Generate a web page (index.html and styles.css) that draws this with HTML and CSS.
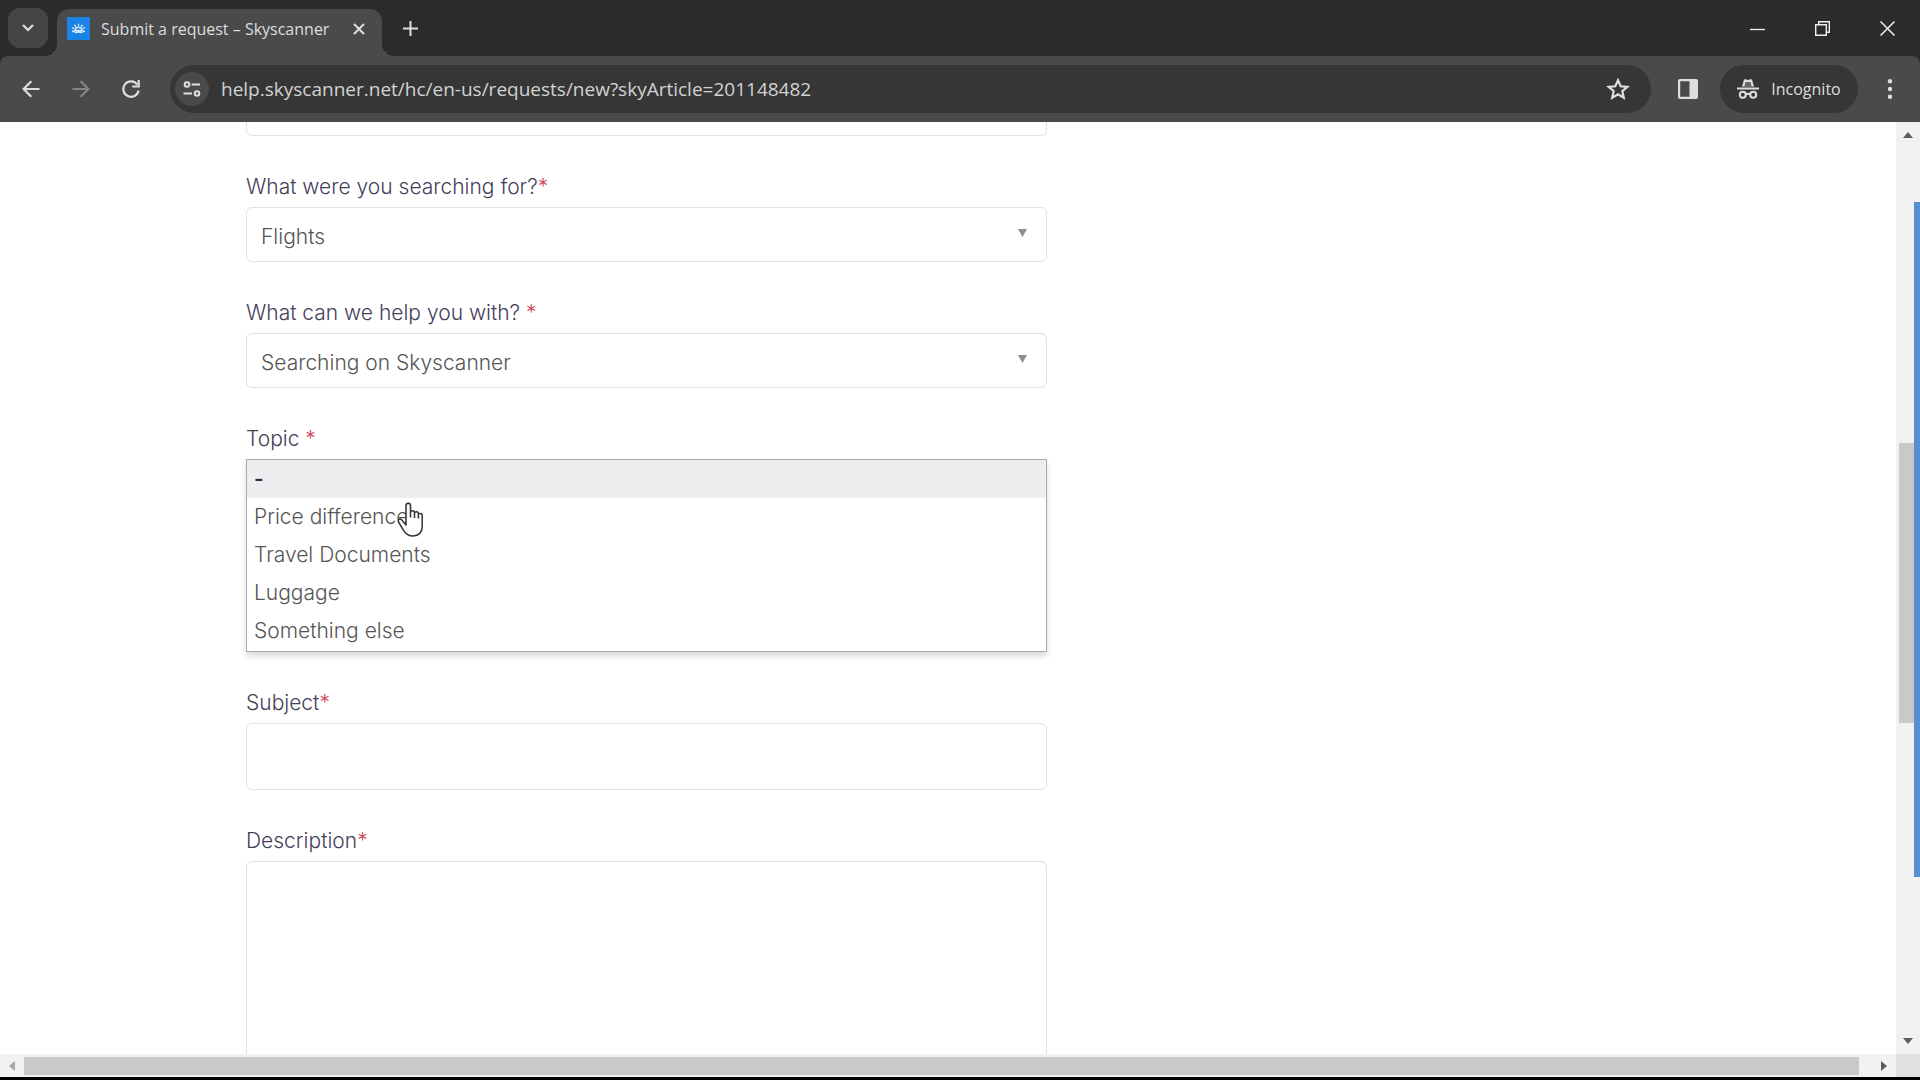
FILE: index.html
```html
<!DOCTYPE html>
<html lang="en">
<head>
<meta charset="utf-8">
<title>Submit a request – Skyscanner</title>
<link rel="stylesheet" href="styles.css">
</head>
<body>
<header class="browser">
  <div class="tabstrip">
    <button class="tab-search" aria-label="Search tabs"><svg width="12" height="8" viewBox="0 0 12 8"><path d="M1 1l5 5 5-5" fill="none" stroke="currentColor" stroke-width="2.2"/></svg></button>
    <div class="tab">
      <svg class="favicon" width="23" height="23" viewBox="0 0 23 23"><rect width="23" height="23" fill="#1b82e6"/><g fill="none" stroke="#d8ecff" stroke-width="1.4" stroke-linecap="round"><path d="M8 13a3.6 3.6 0 0 1 7 0M11.500 7.200v1M7.800 8.300l.8.9M15.200 8.300l-.8.9M5.400 10.800l1.300.4M17.600 10.800l-1.300.4"/><path d="M5.500 14.500c3-1.400 9-1.400 12 0M8 15.600c2-.7 5-.7 7 0"/></g></svg>
      <span class="tab-title">Submit a request – Skyscanner</span>
      <button class="icon-plain" aria-label="Close tab"><svg width="12" height="12" viewBox="0 0 12 12"><path d="M1 1l10 10M11 1L1 11" fill="none" stroke="currentColor" stroke-width="2"/></svg></button>
    </div>
    <button class="new-tab" aria-label="New tab"><svg width="15" height="15" viewBox="0 0 15 15"><path d="M7.500 0v15M0 7.500h15" fill="none" stroke="currentColor" stroke-width="2"/></svg></button>
    <div class="window-controls">
      <button aria-label="Minimize"><svg width="15" height="15" viewBox="0 0 15 15"><path d="M0 8.500h15" stroke="currentColor" stroke-width="1.300"/></svg></button>
      <button aria-label="Restore"><svg width="15" height="15" viewBox="0 0 15 15"><path d="M.7 3.700h10.600v10.600H.7zM3.700 3.500V.7h10.600v10.600h-2.800" fill="none" stroke="currentColor" stroke-width="1.400"/></svg></button>
      <button aria-label="Close"><svg width="15" height="15" viewBox="0 0 15 15"><path d="M.5.5l14 14M14.500.5l-14 14" stroke="currentColor" stroke-width="1.500"/></svg></button>
    </div>
  </div>
  <div class="toolbar">
    <button class="nav" aria-label="Back"><svg width="18" height="18" viewBox="0 0 18 18"><path d="M17.500 9H2M9.300 1.300L1.600 9l7.700 7.700" fill="none" stroke="currentColor" stroke-width="2.200"/></svg></button>
    <button class="nav" aria-label="Forward" disabled><svg width="18" height="18" viewBox="0 0 18 18"><path d="M.5 9H16M8.700 1.300L16.400 9l-7.700 7.700" fill="none" stroke="currentColor" stroke-width="2.200"/></svg></button>
    <button class="nav" aria-label="Reload"><svg width="18" height="18" viewBox="0 0 18 18"><path d="M15.300 4.600A7.700 7.700 0 1 0 16.600 10.500" fill="none" stroke="currentColor" stroke-width="2.200"/><path d="M17.800 0v7.600h-7.600V5.400h5.400V0z" fill="currentColor"/></svg></button>
    <div class="omnibox">
      <button class="site-info" aria-label="View site information"><svg width="18" height="16" viewBox="0 0 18 16" fill="none" stroke="currentColor" stroke-width="2"><circle cx="4" cy="3.500" r="2.300"/><path d="M8.500 3.500H17M.5 12.500H9"/><circle cx="14" cy="12.500" r="2.300"/></svg></button>
      <input class="url" type="text" aria-label="Address" value="help.skyscanner.net/hc/en-us/requests/new?skyArticle=201148482">
      <button class="nav" aria-label="Bookmark this tab"><svg width="24" height="22" viewBox="0 0 24 22"><path d="M12 2.300l2.700 6 6.600.6-5 4.300 1.500 6.500L12 16.300l-5.800 3.400 1.500-6.500-5-4.300 6.600-.6z" fill="none" stroke="currentColor" stroke-width="2.200"/></svg></button>
    </div>
    <button class="nav" aria-label="Side panel"><svg width="20" height="20" viewBox="0 0 20 20"><rect x="1.100" y="1.100" width="17.800" height="17.800" rx="1" fill="none" stroke="currentColor" stroke-width="2.200"/><path d="M11.500 1H19v18h-7.500z" fill="currentColor"/></svg></button>
    <button class="incognito"><svg width="22" height="20" viewBox="0 0 22 20"><path d="M5 7.500L6.800 1.200C7 .3 7.800 0 8.600.2L11 1l2.400-.8c.8-.2 1.600.1 1.800 1L17 7.500z" fill="currentColor"/><path d="M8.400 3h5.200L14.600 7.500H7.400z" fill="#363636" opacity=".7"/><path d="M0 8.500h22v2H0z" fill="currentColor"/><circle cx="5.800" cy="15.800" r="3" fill="none" stroke="currentColor" stroke-width="2.100"/><circle cx="16.200" cy="15.800" r="3" fill="none" stroke="currentColor" stroke-width="2.100"/><path d="M8.800 15.500q2.200-1.400 4.400 0" fill="none" stroke="currentColor" stroke-width="2"/></svg><span>Incognito</span></button>
    <button class="nav" aria-label="Menu"><svg width="6" height="20" viewBox="0 0 6 20" fill="currentColor"><circle cx="3" cy="2.200" r="2.200"/><circle cx="3" cy="10" r="2.200"/><circle cx="3" cy="17.800" r="2.200"/></svg></button>
  </div>
</header>
<div class="viewport">
  <main class="page">
    <form class="request-form">
      <div class="field"><input class="control text" type="text" aria-label="Your email address"></div>
      <div class="field">
        <label for="search">What were you searching for?<span class="req">*</span></label>
        <div class="select-wrap">
          <select id="search" class="control"><option>Flights</option></select>
          <svg class="caret" width="9" height="8" viewBox="0 0 9 8"><path d="M0 0h9L4.500 8z" fill="#8e8e8e"/></svg>
        </div>
      </div>
      <div class="field">
        <label for="help">What can we help you with? <span class="req">*</span></label>
        <div class="select-wrap">
          <select id="help" class="control"><option>Searching on Skyscanner</option></select>
          <svg class="caret" width="9" height="8" viewBox="0 0 9 8"><path d="M0 0h9L4.500 8z" fill="#8e8e8e"/></svg>
        </div>
      </div>
      <div class="field">
        <label for="topic">Topic <span class="req">*</span></label>
        <div class="listbox-wrap">
          <select id="topic" class="listbox" size="5">
            <option class="current">-</option>
            <option>Price difference</option>
            <option>Travel Documents</option>
            <option>Luggage</option>
            <option>Something else</option>
          </select>
          <svg class="pointer" width="27" height="35" viewBox="0 0 27 35"><path d="M9 23V3.500C9 .4 13.500.4 13.500 3.500V14v-3.500c0-2.500 4-2.400 4 .2V14v-2.400c0-2.400 3.900-2.300 3.900.2V15v-2c0-2.200 3.800-2.200 3.800.3V25c0 5-3.600 9-9 9-5 0-8.200-3-10-6.200L1.600 20c-1.200-2.400 1.300-4 3.200-2z" fill="#fff" stroke="#333" stroke-width="1.500" stroke-linejoin="round"/><path d="M13.500 14v1.500M17.500 14v2M21.400 15v1.500" stroke="#333" stroke-width="1.500"/></svg>
        </div>
      </div>
      <div class="field">
        <label for="subject">Subject<span class="req">*</span></label>
        <input id="subject" class="control text" type="text">
      </div>
      <div class="field">
        <label for="description">Description<span class="req">*</span></label>
        <textarea id="description" class="control area"></textarea>
      </div>
    </form>
  </main>
  <div class="vscroll">
    <svg class="arrow" width="10" height="6" viewBox="0 0 10 6"><path d="M0 6h10L5 0z"/></svg>
    <div class="vtrack"><div class="thumb"></div></div>
    <svg class="arrow" width="10" height="6" viewBox="0 0 10 6"><path d="M0 0h10L5 6z"/></svg>
  </div>
  <div class="hscroll">
    <svg class="arrow dim" width="6" height="10" viewBox="0 0 6 10"><path d="M6 0v10L0 5z"/></svg>
    <div class="thumb"></div>
    <svg class="arrow" width="6" height="10" viewBox="0 0 6 10"><path d="M0 0v10l6-5z"/></svg>
  </div>
  <div class="corner"></div>
  <div class="edge-marker"></div>
</div>
</body>
</html>
```
FILE: styles.css
```css
* { box-sizing: border-box; }

body {
  margin: 0;
  height: 100vh;
  display: flex;
  flex-direction: column;
  overflow: hidden;
  background: #fff;
  border-bottom: 3px solid #000;
  font-family: Inter, "Liberation Sans", sans-serif;
}

button {
  display: flex;
  align-items: center;
  justify-content: center;
  flex: none;
  padding: 0;
  border: 0;
  background: none;
  color: inherit;
  font: inherit;
}

/* Browser chrome */
.browser {
  flex: none;
  background: #2b2b2b;
  color: #dedede;
  font-family: "Open Sans", "Noto Sans", sans-serif;
}

.tabstrip {
  display: flex;
  height: 56px;
  padding-left: 8px;
}

.tab-search {
  width: 40px;
  height: 40px;
  margin: 8px 9px 0 0;
  border-radius: 12px;
  background: #454545;
}

.tab {
  position: relative;
  display: flex;
  align-items: center;
  width: 325px;
  height: 47px;
  margin-top: 9px;
  padding: 0 9px 8px 10px;
  border-radius: 12px 12px 0 0;
  background: #4a4a4a;
}

.tab::before,
.tab::after {
  content: "";
  position: absolute;
  bottom: 0;
  width: 12px;
  height: 12px;
}

.tab::before {
  right: 100%;
  background: radial-gradient(circle at 0 0, transparent 12px, #4a4a4a 12px);
}

.tab::after {
  left: 100%;
  background: radial-gradient(circle at 100% 0, transparent 12px, #4a4a4a 12px);
}

.favicon { flex: none; }

.tab-title {
  flex: 1;
  margin-left: 11px;
  font-size: 16px;
  line-height: 24px;
  white-space: nowrap;
}

.icon-plain {
  width: 28px;
  height: 28px;
}

.new-tab {
  width: 40px;
  height: 40px;
  margin: 8px 0 0 8px;
}

.window-controls {
  display: flex;
  height: 56px;
  margin-left: auto;
  color: #f0f0f0;
}

.window-controls button { width: 65px; }

.toolbar {
  display: flex;
  align-items: center;
  gap: 14px;
  height: 66px;
  padding: 0 12px 0 13px;
  border-radius: 8px 8px 0 0;
  background: #4a4a4a;
}

.nav {
  width: 36px;
  height: 36px;
}

.nav:disabled { color: #858585; }

.omnibox {
  display: flex;
  flex: 1;
  align-items: center;
  height: 48px;
  margin: 0 5px 0 7px;
  padding: 0 15px 0 5px;
  border-radius: 24px;
  background: #363636;
}

.site-info {
  width: 34px;
  height: 34px;
  border-radius: 50%;
  background: #4a4a4a;
}

.url {
  flex: 1;
  min-width: 0;
  margin-left: 12px;
  padding: 0;
  border: 0;
  background: none;
  color: #d2d2d2;
  font: 19px/28px "Open Sans", "Noto Sans", sans-serif;
}

.incognito {
  gap: 12px;
  height: 48px;
  width: 138px;
  border-radius: 24px;
  background: #363636;
  font-size: 16px;
}

/* Web page */
.viewport {
  position: relative;
  display: grid;
  flex: 1;
  min-height: 0;
  grid-template-columns: minmax(0, 1fr) 24px;
  grid-template-rows: minmax(0, 1fr) 23px;
}

.page {
  overflow: hidden;
  padding-left: 246px;
}

.request-form {
  max-width: 801px;
  margin-top: -53px;
}

.field { margin-bottom: 35px; }

label {
  display: block;
  margin-bottom: 4px;
  color: #44405a;
  font-size: 21px;
  font-weight: 300;
  line-height: 32px;
}

.req { color: #d1435b; }

.control {
  display: block;
  width: 100%;
  height: 55px;
  padding: 4px 14px 0;
  border: 1px solid #e2e1e4;
  border-radius: 6px;
  background: #fff;
  color: #555;
  font: 300 21px/32px Inter, "Liberation Sans", sans-serif;
}

.control.text { height: 67px; }

.control.area {
  height: 260px;
  resize: none;
}

select { appearance: none; }

.select-wrap { display: grid; }

.select-wrap > * { grid-area: 1 / 1; }

.caret {
  align-self: center;
  justify-self: end;
  margin: 0 20px 4px 0;
  pointer-events: none;
}

.listbox-wrap { position: relative; }

.listbox {
  display: block;
  width: 100%;
  height: 193px;
  padding: 0;
  overflow: hidden;
  border: 1px solid #aaa;
  border-radius: 0;
  outline: 0;
  background: #fff;
  box-shadow: 0 4px 6px rgba(0, 0, 0, .15);
  color: #555;
  font: 300 21px/38px Inter, "Liberation Sans", sans-serif;
}

.listbox option {
  height: 38px;
  min-height: 38px;
  padding: 6px 7px 0;
  font-weight: 300;
}

.listbox .current {
  background: #efedef;
  color: #333;
  font-weight: 600;
}

.pointer {
  position: absolute;
  top: 43px;
  left: 151px;
}

/* Scrollbars */
.vscroll,
.hscroll {
  display: flex;
  align-items: center;
  background: #f3f2f3;
}

.vscroll {
  flex-direction: column;
  padding: 10px 0;
}

.hscroll { padding: 0 9px; }

.thumb { background: #c9c9ca; }

.vtrack {
  display: flex;
  flex: 1;
  flex-direction: column;
  width: 18px;
  margin: 8px 0;
}

.vtrack::before {
  content: "";
  flex: 297;
}

.vtrack::after {
  content: "";
  flex: 307;
}

.vtrack .thumb { flex: 280; }

.hscroll .thumb {
  flex: 1;
  height: 18px;
  margin: 0 22px 0 9px;
}

.arrow {
  flex: none;
  fill: #5c5c5c;
}

.arrow.dim { fill: #a5a5a5; }

.corner { background: #e1e0e1; }

.edge-marker {
  position: absolute;
  top: 80px;
  right: 0;
  bottom: 200px;
  width: 6px;
  background: #568fd0;
}
```
